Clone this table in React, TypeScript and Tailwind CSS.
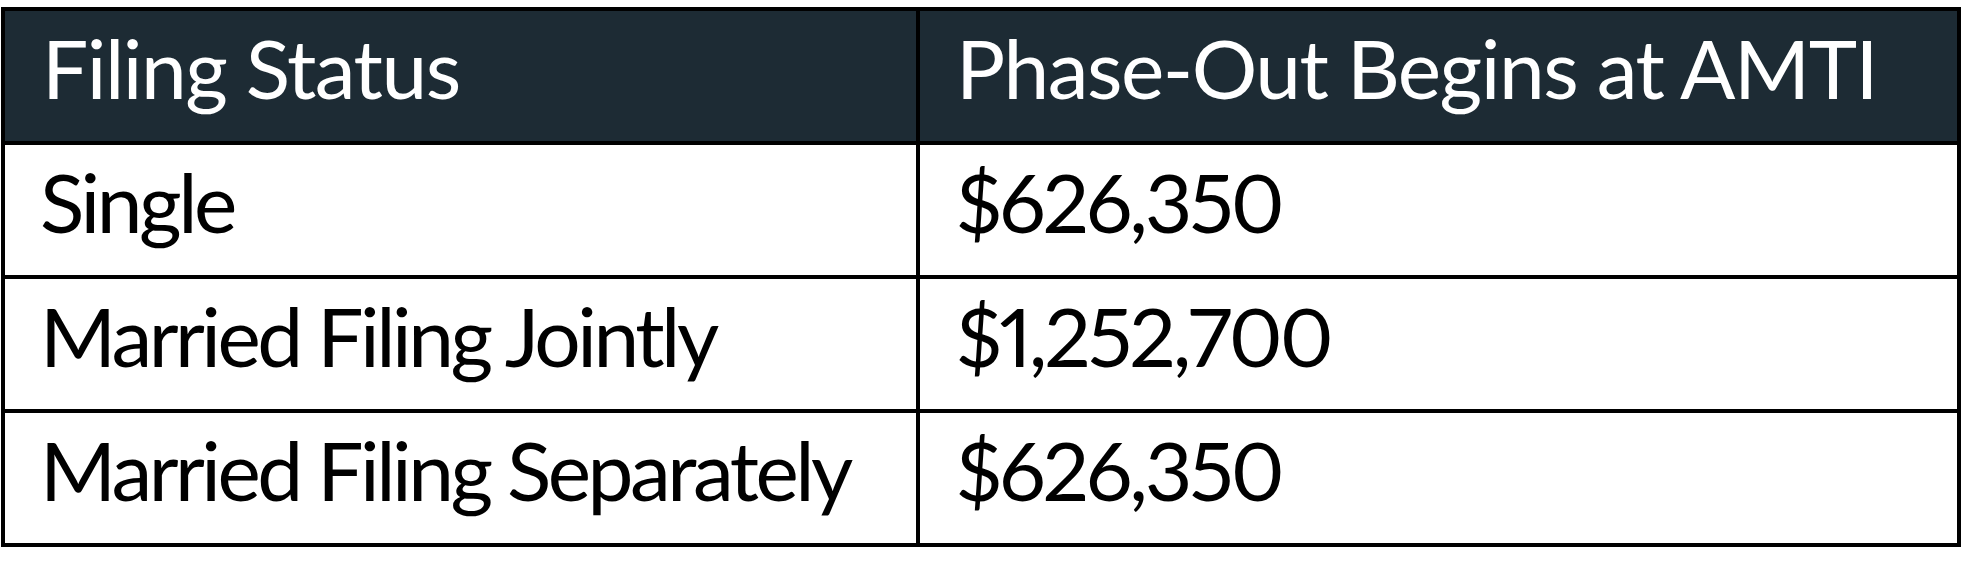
const rows = [
  { status: 'Single', amount: '$626,350' },
  { status: 'Married Filing Jointly', amount: '$1,252,700' },
  { status: 'Married Filing Separately', amount: '$626,350' },
];

export default function App() {
  return (
    <div className="w-[1970px] h-[586px] bg-white pt-[7px] pl-[1px]" style={{ fontFamily: 'Lato, "Noto Sans", sans-serif' }}>
      <div className="w-[1960px] grid grid-cols-[911px_1037px] auto-rows-[130px] gap-[4px] p-[4px] bg-black text-[82px] leading-none whitespace-nowrap proportional-nums">
        <div className="bg-[#1d2b34] text-white flex items-center pl-[37px] pb-[18px] tracking-[-1.5px]">Filing Status</div>
        <div className="bg-[#1d2b34] text-white flex items-center pl-[36px] pb-[18px] tracking-[-1.5px]">Phase-Out Begins at AMTI</div>
        {rows.map((r, i) => (
          <div key={i} className="contents">
            <div className="bg-white text-black flex items-center pl-[35px] pb-[18px] tracking-[-3.5px]">{r.status}</div>
            <div className="bg-white text-black flex items-center pl-[36px] pb-[18px] tracking-[-3px]">{r.amount}</div>
          </div>
        ))}
      </div>
    </div>
  );
}
